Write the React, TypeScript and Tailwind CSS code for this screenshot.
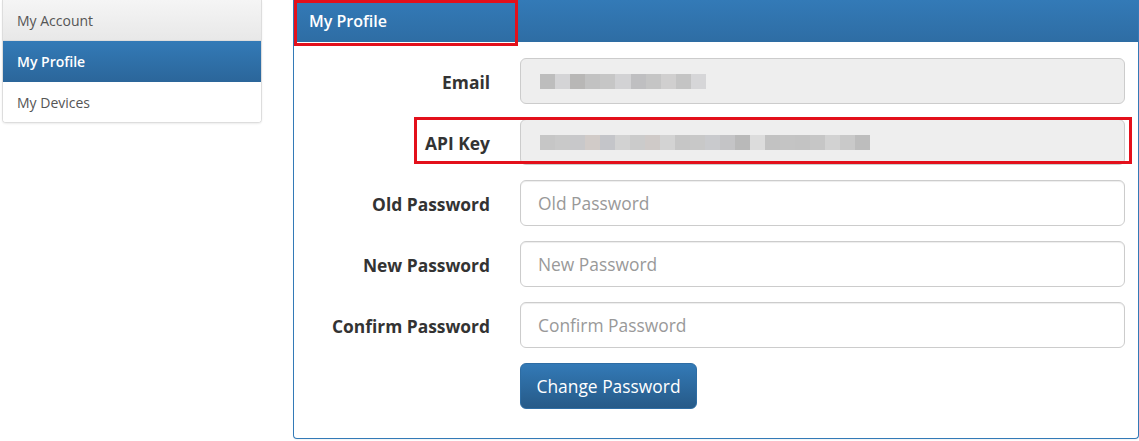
import React from "react";

const emailBlocks = ["#bdbdbd", "#d4d4d6", "#b8b7b6", "#c2c2c2", "#c6c6c6", "#d2d2d4", "#bfbfc1", "#c5c5c5", "#d0cfcf", "#c4c4c4", "#d6d6d8"];
const keyBlocks = [
  "#c6c6c6", "#c9c9c9", "#c8c8ca", "#d1cbc8", "#c4c5c9", "#d2d2d2", "#cbcbcb", "#cfcac8",
  "#d3d3d3", "#c6c6c6", "#c8c8c8", "#c9cacd", "#c4c4c6", "#b9b9b9", "#dcdcdc", "#c2c2c2",
  "#c4c4c4", "#c3c3c3", "#c6c6c6", "#d2d2d2", "#c9c9c9", "#bdbdbd",
];

function Blur({ colors, width }: { colors: string[]; width: number }) {
  return (
    <div className="flex h-[15px]" style={{ width }}>
      {colors.map((c, i) => (
        <div key={i} className="flex-1" style={{ backgroundColor: c }} />
      ))}
    </div>
  );
}

function Row({ label, children }: { label: string; children: React.ReactNode }) {
  return (
    <div className="flex items-center gap-[30px]">
      <label className="w-[196px] shrink-0 pt-[3px] text-right text-[17.4px] font-bold text-[#333]">{label}</label>
      {children}
    </div>
  );
}

function TextField({ placeholder }: { placeholder: string }) {
  return (
    <input
      type="password"
      placeholder={placeholder}
      className="h-[46px] flex-1 rounded-[6px] border border-[#ccc] bg-white px-[17px] text-[17.4px] text-[#555] shadow-[inset_0_1px_1px_rgba(0,0,0,0.075)] outline-none placeholder:text-[#999]"
    />
  );
}

export default function App() {
  const nav = [
    { name: "My Account", state: "plain" },
    { name: "My Profile", state: "active" },
    { name: "My Devices", state: "" },
  ];

  return (
    <div
      className="flex h-[441px] w-[1139px] overflow-hidden bg-white text-[#333]"
      style={{ fontFamily: '"Open Sans", "DejaVu Sans", sans-serif' }}
    >
      <div className="ml-[2px] w-[260px] shrink-0 self-start overflow-hidden rounded-b-[4px] border-x border-b border-[#ddd] shadow-[0_1px_2px_rgba(0,0,0,0.075)]">
        {nav.map((item) => (
          <div
            key={item.name}
            className={
              item.state === "active"
                ? "flex h-[41px] items-center bg-gradient-to-b from-[#337ab7] to-[#2b669a] px-[14px] text-[14px] font-semibold text-white"
                : item.state === "plain"
                ? "flex h-[41px] items-center border-b border-[#ddd] bg-gradient-to-b from-[#f5f5f5] to-[#e8e8e8] px-[14px] text-[14px] text-[#555]"
                : "flex h-[40px] items-center bg-white px-[14px] text-[14px] text-[#555]"
            }
          >
            {item.name}
          </div>
        ))}
      </div>

      <div className="relative ml-[31px] flex h-[439px] flex-1 flex-col rounded-b-[4px] border-x border-b border-[#337ab7] shadow-[0_1px_1px_rgba(0,0,0,0.05)]">
        <div className="flex h-[42px] items-center bg-gradient-to-b from-[#337ab7] to-[#2e6da4] px-[15px] text-[16px] font-semibold text-white">
          My Profile
        </div>
        <div className="pointer-events-none absolute left-0 top-0 h-[46px] w-[224px] border-[3px] border-[#e3101b]" />

        <div className="relative flex flex-col gap-[15px] pr-[13px] pt-[16px]">
          <Row label="Email">
            <div className="flex h-[46px] flex-1 items-center rounded-[6px] border border-[#ccc] bg-[#eee] px-[19px]">
              <Blur colors={emailBlocks} width={166} />
            </div>
          </Row>
          <Row label="API Key">
            <div className="flex h-[46px] flex-1 items-center rounded-[6px] border border-[#ccc] bg-[#eee] px-[19px]">
              <Blur colors={keyBlocks} width={330} />
            </div>
          </Row>
          <div className="pointer-events-none absolute left-[120px] top-[75px] h-[47px] w-[718px] border-[3px] border-[#e3101b]" />
          <Row label="Old Password">
            <TextField placeholder="Old Password" />
          </Row>
          <Row label="New Password">
            <TextField placeholder="New Password" />
          </Row>
          <Row label="Confirm Password">
            <TextField placeholder="Confirm Password" />
          </Row>
          <div className="pl-[226px]">
            <button className="h-[46px] w-[177px] rounded-[6px] border border-[#2e6da4] bg-gradient-to-b from-[#337ab7] to-[#265a88] text-[17.4px] text-white">
              Change Password
            </button>
          </div>
        </div>
      </div>
    </div>
  );
}
